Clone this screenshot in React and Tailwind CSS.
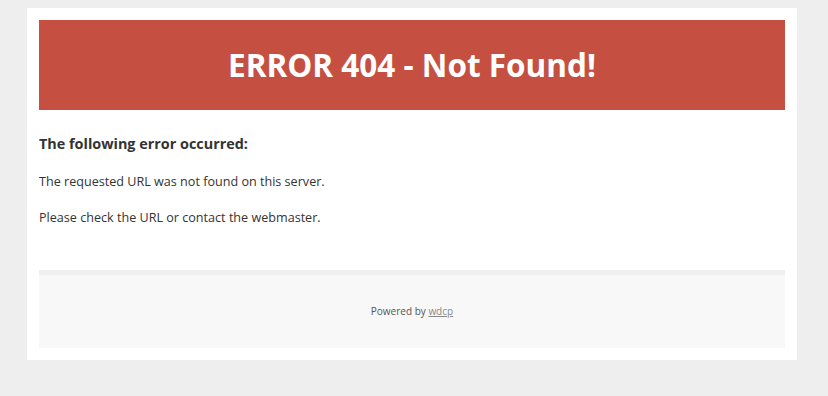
export default function App() {
  return (
    <div className="min-h-[396px] bg-[#eeeeee] pt-2 px-[27px] pb-9">
      <div className="w-[770px] bg-white p-3" style={{ fontFamily: '"Open Sans", "DejaVu Sans", sans-serif' }}>
        <div className="h-[90px] bg-[#c55042] flex items-center justify-center">
          <h1 className="text-[31.5px] font-bold text-white">ERROR 404 - Not Found!</h1>
        </div>
        <div className="pt-[23px] pb-[43px] text-[#333333]">
          <h2 className="text-[14.4px] font-bold leading-[22px]">The following error occurred:</h2>
          <p className="text-[12.6px] leading-[18px] mt-[18px]">The requested URL was not found on this server.</p>
          <p className="text-[12.6px] leading-[18px] mt-[18px]">Please check the URL or contact the webmaster.</p>
        </div>
        <div className="border-t-[5px] border-[#efefef] bg-[#f8f8f8] h-[78px] flex items-center justify-center text-[10px] text-[#555555]">
          <span>Powered by <a className="text-[#888888] underline">wdcp</a></span>
        </div>
      </div>
    </div>
  );
}
